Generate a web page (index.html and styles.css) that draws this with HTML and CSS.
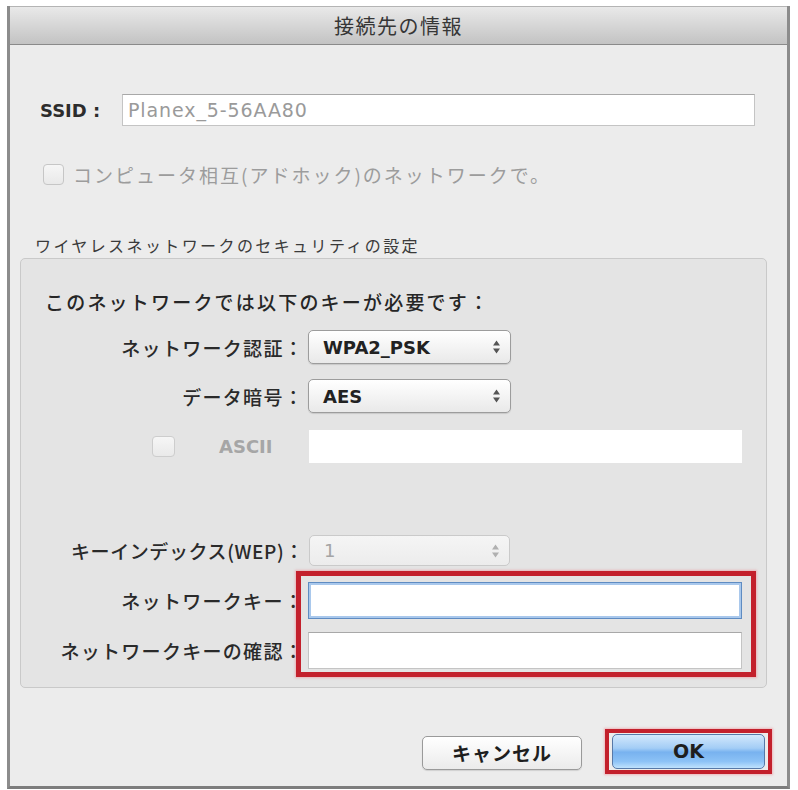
FILE: index.html
```html
<!DOCTYPE html>
<html lang="ja">

<head>
  <meta charset="UTF-8">
  <meta name="viewport" content="width=device-width, initial-scale=1.0">
  <title>接続先の情報</title>
  <link rel="stylesheet" href="styles.css">
</head>

<body>
  <div class="dialog">
    <div class="titlebar">接続先の情報</div>

    <div class="content">
      <div class="ssid-row">
        <span class="ssid-label">SSID :</span>
        <div class="field ssid-field">Planex_5-56AA80</div>
      </div>

      <div class="adhoc-row">
        <span class="check"></span>
        <span class="adhoc-text">コンピュータ相互(アドホック)のネットワークで。</span>
      </div>

      <div class="section-title">ワイヤレスネットワークのセキュリティの設定</div>

      <div class="group">
        <div class="group-head">このネットワークでは以下のキーが必要です：</div>

        <div class="row row-auth">
          <span class="lbl">ネットワーク認証：</span>
          <div class="popup">
            <span>WPA2_PSK</span>
            <svg class="arrows" width="9" height="16" viewBox="0 0 9 16"><path d="M4.5 1.5 L8 6.5 H1 Z M4.5 14.5 L8 9.5 H1 Z"/></svg>
          </div>
        </div>

        <div class="row row-enc">
          <span class="lbl">データ暗号：</span>
          <div class="popup">
            <span>AES</span>
            <svg class="arrows" width="9" height="16" viewBox="0 0 9 16"><path d="M4.5 1.5 L8 6.5 H1 Z M4.5 14.5 L8 9.5 H1 Z"/></svg>
          </div>
        </div>

        <div class="row row-ascii">
          <div class="ascii-lbl">
            <span class="check"></span>
            <span class="ascii-text">ASCII</span>
          </div>
          <div class="field ascii-field"></div>
        </div>

        <div class="row row-index">
          <span class="lbl">キーインデックス(WEP)：</span>
          <div class="popup disabled">
            <span>1</span>
            <svg class="arrows" width="9" height="16" viewBox="0 0 9 16"><path d="M4.5 1.5 L8 6.5 H1 Z M4.5 14.5 L8 9.5 H1 Z"/></svg>
          </div>
        </div>

        <div class="row row-key">
          <span class="lbl">ネットワークキー：</span>
          <div class="field key-field focused"></div>
        </div>

        <div class="row row-confirm">
          <span class="lbl">ネットワークキーの確認：</span>
          <div class="field key-field"></div>
        </div>

        <!-- 赤枠：キー入力欄 -->
        <div class="mark keys-mark"></div>
      </div>

      <div class="buttons">
        <div class="btn cancel">キャンセル</div>
        <div class="ok-mark">
          <div class="btn ok">OK</div>
        </div>
      </div>
    </div>
  </div>
</body>

</html>
```

FILE: styles.css
```css
html {
  background: #fff;
}

body {
  margin: 0;
  font-family: "DejaVu Sans", "Noto Sans CJK JP", sans-serif;
  color: #2a2a2a;
}

.dialog {
  margin: 6px 0 0 7px;
  width: 777px;
  height: 780px;
  background: #ececec;
  border-left: 3px solid #8c8c8c;
  border-right: 3px solid #8c8c8c;
  border-bottom: 3px solid #7d7d7d;
}

.titlebar {
  height: 37px;
  line-height: 37px;
  text-align: center;
  font-family: "Noto Sans CJK JP", sans-serif;
  font-size: 20px;
  letter-spacing: 1.5px;
  color: #363636;
  background: linear-gradient(#e9e9e9, #d6d6d6 50%, #c3c3c3);
  border-top: 1px solid #b4b4b4;
  border-bottom: 1px solid #8a8a8a;
}

.content {
  padding: 49px 0 0 0;
}

/* SSID */
.ssid-row {
  display: flex;
  align-items: center;
  padding-left: 30px;
  height: 32px;
}

.ssid-label {
  width: 82px;
  font-size: 18px;
  font-weight: bold;
  color: #2c2c2c;
}

.field {
  background: #fff;
  border: 1px solid #c4c4c4;
  border-top-color: #a8a8a8;
  box-sizing: border-box;
}

.ssid-field {
  width: 633px;
  height: 32px;
  line-height: 30px;
  padding-left: 5px;
  font-size: 19px;
  letter-spacing: 0.9px;
  color: #9a9a9a;
}

.check {
  display: inline-block;
  width: 21px;
  height: 21px;
  box-sizing: border-box;
  border: 1px solid #c6c6c6;
  border-radius: 4px;
  background: linear-gradient(#f6f6f6, #e9e9e9);
  flex: none;
}

.adhoc-row {
  display: flex;
  align-items: center;
  margin-top: 38px;
  padding-left: 33px;
  height: 21px;
}

.adhoc-text {
  margin-left: 9px;
  font-family: "Noto Sans CJK JP", sans-serif;
  font-size: 19px;
  letter-spacing: 2px;
  color: #9c9c9c;
}

.section-title {
  margin-top: 49px;
  padding-left: 25px;
  height: 22px;
  line-height: 22px;
  font-family: "Noto Sans CJK JP", sans-serif;
  font-size: 16px;
  letter-spacing: 2.4px;
  color: #3a3a3a;
}

/* セキュリティ設定の枠 */
.group {
  position: relative;
  margin: 2px 0 0 10px;
  width: 747px;
  height: 430px;
  box-sizing: border-box;
  background: #e4e4e4;
  border: 1px solid #c9c9c9;
  border-radius: 5px;
  font-family: "Noto Sans CJK JP", sans-serif;
}

.group-head {
  margin-top: 31px;
  padding-left: 24px;
  height: 24px;
  line-height: 24px;
  font-size: 19px;
  font-weight: 500;
  letter-spacing: 2.2px;
  color: #262626;
}

.row {
  display: flex;
  align-items: center;
}

.lbl {
  width: 283px;
  text-align: right;
  font-size: 19px;
  font-weight: 500;
  letter-spacing: 1.3px;
  color: #2a2a2a;
  white-space: nowrap;
}

.row-index .lbl {
  letter-spacing: 0.6px;
}

.popup {
  margin-left: 4px;
  width: 203px;
  height: 34px;
  box-sizing: border-box;
  display: flex;
  align-items: center;
  justify-content: space-between;
  padding: 0 9px 0 14px;
  border: 1px solid #9c9c9c;
  border-radius: 5px;
  background: linear-gradient(#ffffff, #f4f4f4 50%, #e9e9e9);
  box-shadow: 0 1px 1px rgba(0, 0, 0, 0.12);
  font-family: "DejaVu Sans", sans-serif;
  font-size: 18px;
  font-weight: bold;
  color: #222;
}

.arrows {
  fill: #555;
}

.popup.disabled {
  height: 31px;
  margin-left: 5px;
  width: 201px;
  border-color: #cacaca;
  background: linear-gradient(#f5f5f5, #ececec);
  box-shadow: none;
  font-weight: normal;
  color: #a4a4a4;
}

.popup.disabled .arrows {
  fill: #b0b0b0;
}

.row-auth {
  margin-top: 16px;
}

.row-enc {
  margin-top: 15px;
}

.row-ascii {
  margin-top: 17px;
}

.ascii-lbl {
  width: 288px;
  display: flex;
  align-items: center;
  padding-left: 131px;
  box-sizing: border-box;
}

.ascii-lbl .check {
  width: 23px;
  height: 21px;
  border-color: #cdcdcd;
}

.ascii-text {
  margin-left: 44px;
  font-family: "DejaVu Sans", sans-serif;
  font-size: 18px;
  font-weight: bold;
  color: #a6a6a6;
}

.ascii-field {
  width: 433px;
  height: 33px;
  border: none;
}

.row-index {
  margin-top: 72px;
}

.row-key {
  margin-top: 16px;
}

.row-confirm {
  margin-top: 13px;
}

.key-field {
  margin-left: 4px;
  width: 434px;
  height: 37px;
}

.key-field.focused {
  border: 1px solid #5f8cc2;
  box-shadow: inset 0 0 0 2px #a9c8ec;
}

/* 赤い強調枠 */
.mark {
  position: absolute;
  border: 5px solid #c3202c;
  box-shadow: 0 0 2px 1px rgba(240, 130, 140, 0.5);
  pointer-events: none;
}

.keys-mark {
  left: 275px;
  top: 312px;
  width: 450px;
  height: 96px;
}

/* ボタン */
.buttons {
  display: flex;
  justify-content: flex-end;
  align-items: center;
  gap: 23px;
  margin-top: 41px;
  padding-right: 15px;
}

.btn {
  box-sizing: border-box;
  height: 34px;
  line-height: 32px;
  text-align: center;
  border-radius: 5px;
  font-weight: bold;
  font-size: 19px;
  color: #1e1e1e;
}

.cancel {
  width: 160px;
  margin-top: 2px;
  border: 1px solid #9a9a9a;
  background: linear-gradient(#ffffff, #f5f5f5 50%, #ebebeb);
  box-shadow: 0 1px 1px rgba(0, 0, 0, 0.12);
  font-family: "Noto Sans CJK JP", sans-serif;
  letter-spacing: 1px;
}

.ok-mark {
  padding: 1px 3px;
  border: 4px solid #c3202c;
  box-shadow: 0 0 2px 1px rgba(240, 130, 140, 0.5);
}

.ok {
  width: 153px;
  height: 35px;
  border: 1px solid #5779a8;
  background: linear-gradient(#d3e8fc, #a3cdf6 40%, #78b2ef 52%, #8cc2f6 80%, #bfe2fd);
  font-family: "DejaVu Sans", sans-serif;
}
```
